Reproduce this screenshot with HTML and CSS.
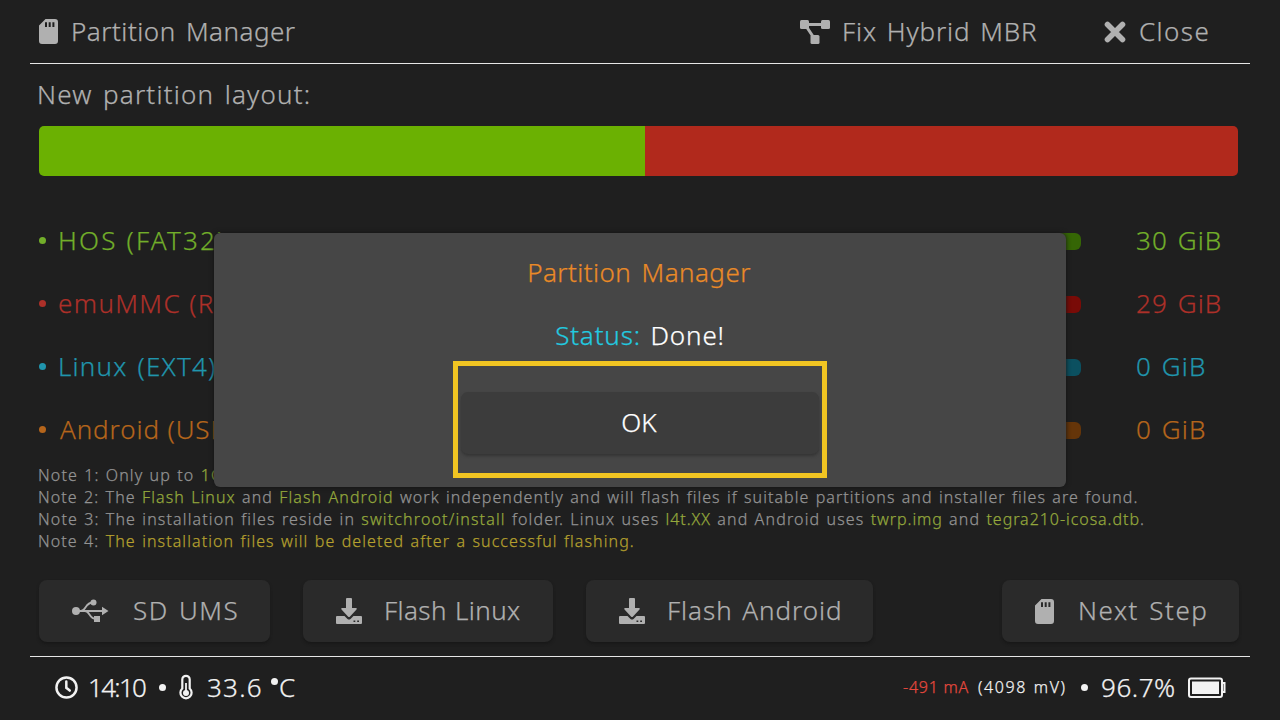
FILE: index.html
```html
<!DOCTYPE html>
<html lang="en">
<head>
<meta charset="utf-8">
<title>Partition Manager</title>
<link rel="stylesheet" href="styles.css">
</head>
<body>
<svg class="defs" aria-hidden="true">
  <symbol id="sd" viewBox="0 0 19 25"><path fill-rule="evenodd" d="M6.500 0H16a3 3 0 0 1 3 3v19a3 3 0 0 1-3 3H3a3 3 0 0 1-3-3V6.500zM6 3.300V8h2V3.300zm3.700 0V8h2V3.300zm3.700 0V8h2V3.300z"/></symbol>
  <symbol id="download" viewBox="0 0 26 26"><path fill-rule="evenodd" d="M10 1q0-1 1-1h4q1 0 1 1v9h4q1.500.200.500 1.500l-6.700 7.200q-.800.800-1.600 0l-6.700-7.200q-1-1.300.500-1.500h4zM1 18h7.500l3 3q1.500 1.200 3 0l3-3H25q1 0 1 1v6q0 1-1 1H1q-1 0-1-1v-6q0-1 1-1zm16.500 4.500v1.600h1.800v-1.600zm3.700 0v1.600H23v-1.600z"/></symbol>
</svg>
<div class="screen">
  <header class="topbar">
    <div class="title"><svg class="ic-sd"><use href="#sd"/></svg><span class="t-title">Partition Manager</span></div>
    <div class="action fix">
      <svg class="ic-mbr" viewBox="0 0 30 24"><path d="M7 4.500h15M6 6l8 12" stroke="currentColor" stroke-width="3"/><rect width="9" height="9" rx="1.500"/><rect x="21" width="9" height="9" rx="1.500"/><rect x="10.500" y="15" width="9" height="9" rx="1.500"/></svg>
      <span class="t-fix">Fix Hybrid MBR</span>
    </div>
    <div class="action close">
      <svg class="ic-close" viewBox="0 0 22 22"><path d="M3.500 3.500l15 15M18.500 3.500l-15 15" stroke="currentColor" stroke-width="5.600" stroke-linecap="round"/></svg>
      <span class="t-close">Close</span>
    </div>
  </header>

  <div class="heading">New partition layout:</div>
  <div class="bar"><div class="bar-hos"></div><div class="bar-emu"></div></div>

  <div class="parts">
    <div class="part hos"><i class="dot"></i><span class="name">HOS (FAT32)</span><i class="slider"></i><span class="size">30 GiB</span></div>
    <div class="part emu"><i class="dot"></i><span class="name">emuMMC (RAW)</span><i class="slider"></i><span class="size">29 GiB</span></div>
    <div class="part linux"><i class="dot"></i><span class="name">Linux (EXT4)</span><i class="slider"></i><span class="size">0 GiB</span></div>
    <div class="part android"><i class="dot"></i><span class="name">Android (USER)</span><i class="slider"></i><span class="size">0 GiB</span></div>
  </div>

  <div class="notes">
    <p>Note 1: Only up to <b>1GB</b></p>
    <p class="n2">Note 2: The <b>Flash Linux</b> and <b>Flash Android</b> <span class="n-work">work independently and will flash files if suitable partitions and installer files are found.</span></p>
    <p class="n3">Note 3: The installation files reside in <b>switchroot/install</b> folder. Linux uses <b class="tight">l4t.XX</b> and Android uses <b class="tight">twrp.img</b> and <b class="tight">tegra210-icosa.dtb</b>.</p>
    <p class="n4">Note 4: <em>The installation files will be deleted after a successful flashing.</em></p>
  </div>

  <div class="buttons">
    <div class="btn b-ums"><svg class="ic-usb" viewBox="0 0 36 24"><circle cx="4" cy="12" r="4"/><path d="M30 7.800L36.500 12 30 16.200zM22 17h6v6h-6z"/><circle cx="21.500" cy="3.500" r="3"/><path d="M4 12h28M9 12c5 0 4-8.500 12-8.500M13 12c5 0 4 8 11 8" fill="none" stroke="currentColor" stroke-width="1.800"/></svg><span>SD UMS</span></div>
    <div class="btn b-linux"><svg class="ic-dl"><use href="#download"/></svg><span>Flash Linux</span></div>
    <div class="btn b-android"><svg class="ic-dl"><use href="#download"/></svg><span>Flash Android</span></div>
    <div class="btn b-next"><svg class="ic-sd"><use href="#sd"/></svg><span>Next Step</span></div>
  </div>

  <footer class="status">
    <svg class="ic-clock" viewBox="0 0 24 24"><circle cx="12" cy="12" r="10.500" fill="none" stroke="currentColor" stroke-width="2.600"/><path d="M11.800 5.800v6.500l3.600 2.900" fill="none" stroke="currentColor" stroke-width="2.600" stroke-linecap="round"/></svg>
    <span class="time">14:10</span><i class="dot"></i>
    <svg class="ic-temp" viewBox="0 0 14 25"><path d="M3.300 13.500V4.500a3.700 3.700 0 0 1 7.400 0v9a5.600 5.600 0 1 1-7.400 0z" fill="none" stroke="currentColor" stroke-width="2.200"/><circle cx="7" cy="18" r="3"/><path d="M7 8v9" stroke="currentColor" stroke-width="1.800"/></svg>
    <span class="temp">33.6</span><span class="unit"><i class="degree"></i>C</span>
    <span class="amps">-491 mA</span><span class="volts">(4098 mV)</span><i class="dot"></i><span class="pct">96.7%</span>
    <svg class="ic-bat" viewBox="0 0 38 22"><rect x="1" y="1.500" width="33" height="18.500" rx="2" fill="none" stroke="currentColor" stroke-width="2"/><rect x="4" y="4.500" width="27" height="12.500"/><path d="M34 6h2.500v9H34" fill="none" stroke="currentColor" stroke-width="2"/></svg>
  </footer>

  <div class="modal">
    <div class="m-title">Partition Manager</div>
    <div class="m-status"><span>Status:</span> Done!</div>
    <div class="highlight"><div class="ok">OK</div></div>
  </div>
</div>
</body>
</html>
```

FILE: styles.css
```css
* { box-sizing: border-box; }
body { margin: 0; background: #1f1f1f; }
.defs { position: absolute; width: 0; height: 0; }
svg { display: block; flex: none; fill: currentColor; overflow: visible; }
.screen {
  position: relative;
  width: 1280px;
  height: 720px;
  overflow: hidden;
  display: flex;
  flex-direction: column;
  background: #1f1f1f;
  color: #b0b0b0;
  font: 300 26px/36px "Noto Sans", "Liberation Sans", sans-serif;
  -webkit-text-stroke: .25px currentColor;
  white-space: nowrap;
}
.dot { width: 7px; height: 7px; border-radius: 50%; background: currentColor; flex: none; }

.topbar {
  display: flex;
  align-items: center;
  height: 64px;
  margin: 0 30px;
  padding-left: 9px;
  border-bottom: 1px solid #e6e6e6;
}
.title, .action { display: flex; align-items: center; }
.title span, .action span, .btn span { padding-bottom: 2px; }
.title { width: 761px; gap: 13px; }
.ic-sd { width: 19px; height: 25px; }
.ic-mbr { width: 30px; height: 24px; }
.ic-close { width: 22px; height: 22px; }
.fix { width: 304px; gap: 12px; }
.close { gap: 13px; }
.t-title { letter-spacing: .5px; word-spacing: 3px; }
.t-fix { letter-spacing: .9px; word-spacing: 2px; }
.t-close { letter-spacing: 1.400px; }

.heading { height: 62px; padding: 12px 0 0 37px; letter-spacing: 1.200px; word-spacing: 2.500px; }
.bar { display: flex; height: 50px; margin: 0 42px 0 39px; border-radius: 5px; overflow: hidden; }
.bar-hos { width: 606px; background: #6bb102; }
.bar-emu { flex: 1; background: #b1291c; }

.parts { height: 289px; padding: 33px 0 0 39px; }
.part { display: grid; grid-template-columns: 19px 282px 741px 1fr; align-items: center; height: 63px; }
.name, .size { padding-bottom: 2px; }
.name { letter-spacing: 1.400px; }
.slider { height: 17px; margin-top: 2px; border-radius: 6px; }
.size { padding-left: 55px; letter-spacing: 1.100px; word-spacing: 2px; }
.hos { color: #72ae2a; }
.hos .name { letter-spacing: 2.200px; }
.hos .slider { background: #356605; }
.emu { color: #ad3029; }
.emu .slider { background: #790b07; }
.linux { color: #2095ad; }
.linux .name { letter-spacing: 1.200px; word-spacing: 2px; }
.linux .slider { background: #0b5060; }
.android { color: #b5651b; }
.android .name { letter-spacing: .9px; padding-left: 2px; }
.android .slider { background: #653509; }

.notes { margin-top: -1px; padding-left: 38px; height: 116px; font-size: 16px; line-height: 22px; color: #939393; letter-spacing: 1.150px; word-spacing: .9px; }
.notes p { margin: 0; }
.notes b { font-weight: 300; color: #94a83c; }
.notes em { font-style: normal; color: #b5a02e; }
.notes .tight { letter-spacing: .95px; }
.n2 { letter-spacing: 1.080px; word-spacing: 1.100px; }
.n-work { letter-spacing: 1.050px; word-spacing: 1.100px; }
.n4 { letter-spacing: 1.090px; word-spacing: 1.100px; }

.buttons { display: flex; height: 76px; margin: 0 41px 0 39px; }
.btn { display: flex; align-items: center; height: 62px; border-radius: 8px; background: #2a2a2a; box-shadow: 0 2px 3px #181818; padding-left: 33px; }
.b-ums { width: 231px; margin-right: 33px; gap: 25px; letter-spacing: 1.500px; word-spacing: 2px; }
.b-linux { width: 250px; margin-right: 33px; gap: 22px; letter-spacing: .4px; word-spacing: 1px; }
.b-android { width: 287px; gap: 22px; letter-spacing: .95px; word-spacing: 2px; }
.b-next { width: 237px; margin-left: auto; gap: 24px; letter-spacing: 1.550px; word-spacing: 2px; }
.ic-usb { width: 36px; height: 24px; }
.ic-dl { width: 26px; height: 26px; }

.status {
  display: flex;
  align-items: center;
  height: 64px;
  margin: 0 30px;
  padding: 0 0 2px 25px;
  border-top: 1px solid #e6e6e6;
  color: #f2f2f2;
}
.status span { padding-bottom: 2px; }
.ic-clock { width: 23px; height: 23px; }
.time { width: 71px; margin-left: 10px; letter-spacing: -1.700px; }
.ic-temp { width: 14px; height: 25px; margin-left: 13px; }
.temp { margin-left: 14px; width: 64px; letter-spacing: 1.250px; }
.unit { display: flex; }
.degree { width: 7px; height: 7px; margin: 9px 1px 0 0; border-radius: 50%; background: currentColor; }
.amps, .volts { font-size: 16px; }
.amps { margin-left: auto; color: #e5483d; letter-spacing: .75px; width: 75px; }
.volts { letter-spacing: 1.600px; word-spacing: 1px; width: 103px; }
.pct { margin-left: 13px; letter-spacing: .55px; width: 87px; }
.ic-bat { width: 38px; height: 22px; margin-right: 24px; }

.modal {
  position: absolute;
  left: 214px;
  top: 233px;
  width: 852px;
  height: 254px;
  display: flex;
  flex-direction: column;
  align-items: center;
  padding-top: 21px;
  border-radius: 6px;
  background: #464646;
  box-shadow: 0 0 5px #151515;
  color: #fff;
}
.m-title { height: 63px; padding-right: 2px; color: #ea8a27; letter-spacing: .45px; word-spacing: 3px; }
.m-status { height: 44px; letter-spacing: .85px; word-spacing: 2px; }
.m-status span { color: #22cbe0; }
.highlight { width: 374px; height: 117px; padding: 26px 3px; border: 5px solid #f1c522; }
.ok { height: 62px; padding-right: 2px; border-radius: 7px; background: #3c3c3c; box-shadow: 0 2px 3px #353535; text-align: center; line-height: 61px; }
```
